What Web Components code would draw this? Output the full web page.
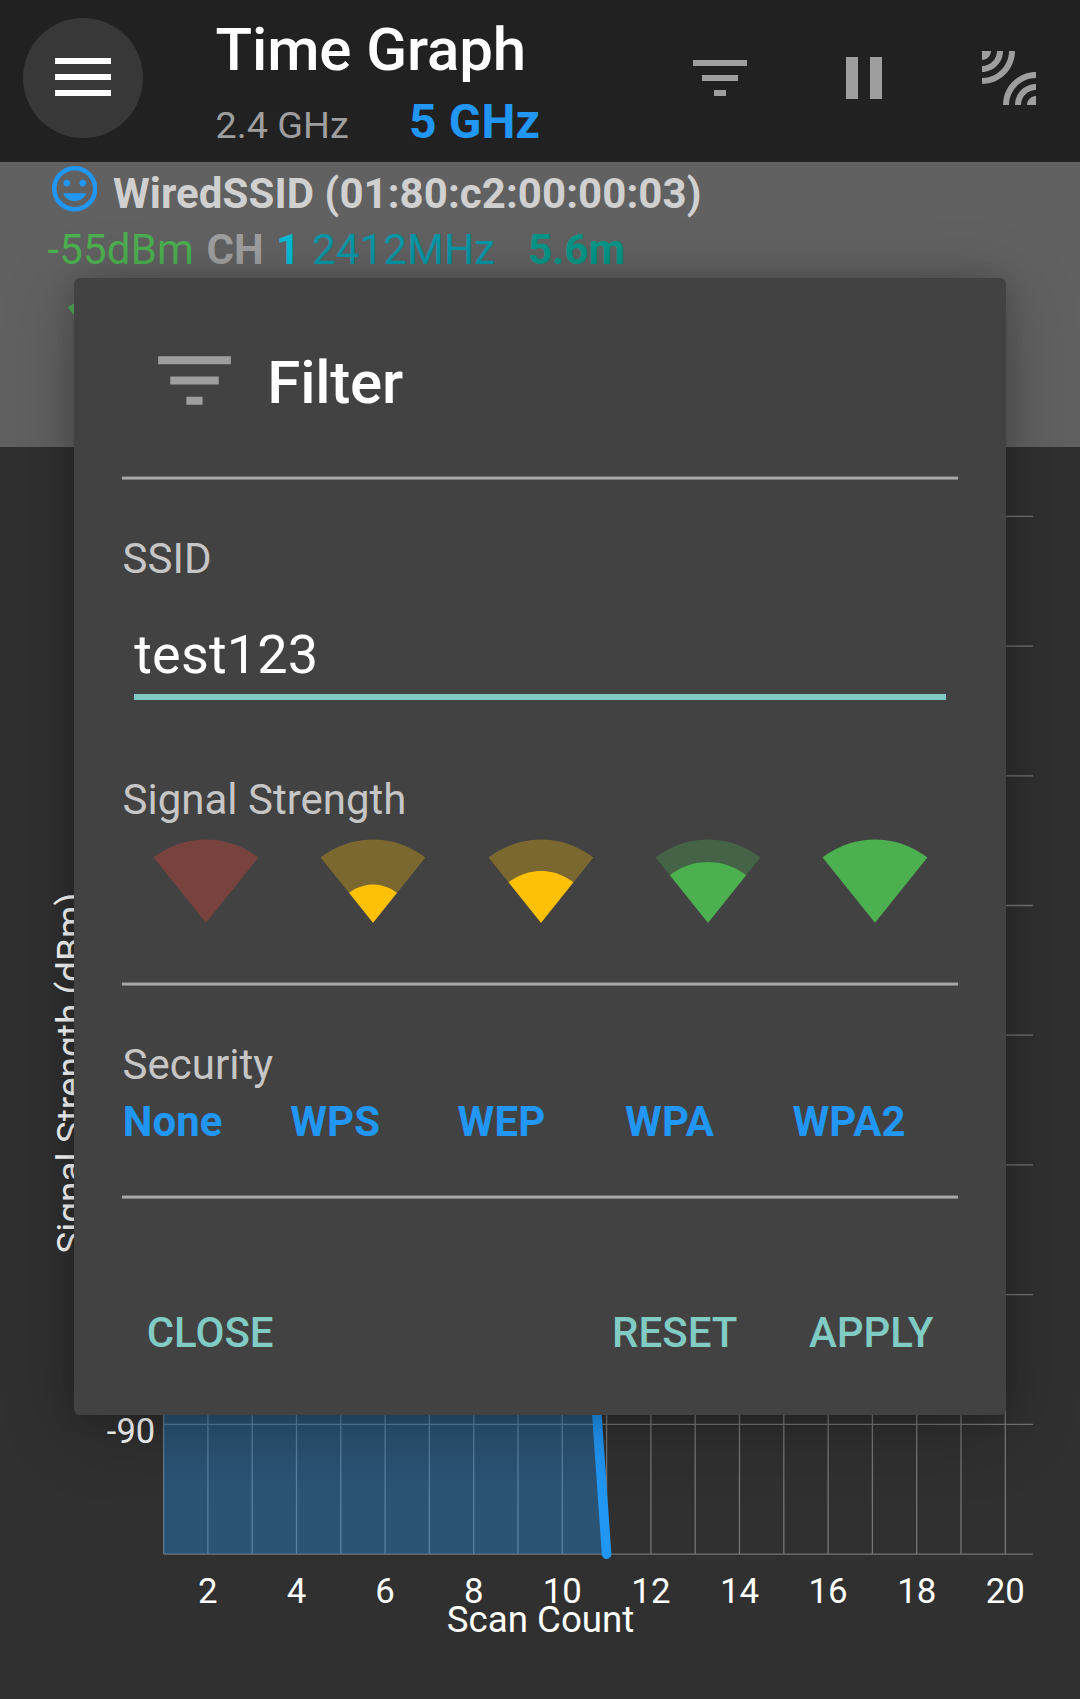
<!DOCTYPE html>
<html lang="en">
<head>
<meta charset="utf-8">
<title>Time Graph</title>
<style>
html, body { margin: 0; padding: 0; background: #303030; }
body { font-family: Roboto, "Liberation Sans", sans-serif; width: 1080px; height: 1699px; overflow: hidden; }
</style>
</head>
<body>
<wifi-app></wifi-app>
<script>
const define = (name, html, init) => {
  const template = document.createElement('template');
  template.innerHTML = html;
  customElements.define(name, class extends HTMLElement {
    connectedCallback() {
      if (this.shadowRoot) return;
      this.attachShadow({ mode: 'open' }).append(template.content.cloneNode(true));
      if (init) init(this, this.shadowRoot);
    }
  });
};

const ICONS = {
  filter: '<path d="M10 18h4v-2h-4v2zM3 6v2h18V6H3zm3 7h12v-2H6v2z"/>',
  pause: '<path d="M6 19h4V5H6v14zm8-14v14h4V5h-4z"/>',
  leak: '<path d="M6 3H3v3c1.66 0 3-1.34 3-3zm8 0h-2c0 4.97-4.03 9-9 9v2c6.08 0 11-4.93 11-11zm-4 0H8c0 2.76-2.24 5-5 5v2c3.87 0 7-3.13 7-7zm0 18h2c0-4.97 4.03-9 9-9v-2c-6.07 0-11 4.93-11 11zm8 0h3v-3c-1.66 0-3 1.34-3 3zm-4 0h2c0-2.76 2.24-5 5-5v-2c-3.87 0-7 3.13-7 7z"/>',
  smile: '<path d="M11.99 2C6.47 2 2 6.48 2 12s4.47 10 9.99 10C17.52 22 22 17.52 22 12S17.52 2 11.99 2zM12 20c-4.42 0-8-3.58-8-8s3.58-8 8-8 8 3.58 8 8-3.58 8-8 8zm3.5-9c.83 0 1.5-.67 1.5-1.5S16.33 8 15.5 8 14 8.67 14 9.5s.67 1.5 1.5 1.5zm-7 0c.83 0 1.5-.67 1.5-1.5S9.33 8 8.5 8 7 8.67 7 9.5 7.67 11 8.5 11zm3.5 6.5c2.33 0 4.31-1.46 5.11-3.5H6.89c.8 2.04 2.78 3.5 5.11 3.5z"/>'
};
const WEDGE = 'M12.01 21.49L23.64 7c-.45-.34-4.93-4-11.64-4C5.28 3 .81 6.66.36 7l11.63 14.49.01.01.01-.01z';
const LEVELS = [
  '',
  'M6.67 14.86L12 21.49v.01l.01-.01 5.33-6.63C17.06 14.65 15.03 13 12 13s-5.06 1.65-5.33 1.86z',
  'M4.79 12.52l7.2 8.98H12l.01-.01 7.2-8.98C18.85 12.24 16.1 10 12 10s-6.79 2.24-7.21 2.52z',
  'M3.53 10.95l8.46 10.54.01.01.01-.01 8.46-10.54C20.04 10.62 16.81 8 12 8c-4.81 0-8.04 2.62-8.47 2.95z',
  WEDGE
];

define('md-icon', `<style>
:host { display: block; flex: none; width: 72px; height: 72px; color: #9e9e9e; }
svg { display: block; width: 100%; height: 100%; fill: currentColor; }
</style><svg viewBox="0 0 24 24"></svg>`, (el, root) => {
  const svg = root.querySelector('svg');
  if (el.hasAttribute('box')) svg.setAttribute('viewBox', el.getAttribute('box'));
  svg.innerHTML = ICONS[el.getAttribute('name')];
});

define('signal-icon', `<style>
:host { display: block; flex: none; width: 108px; height: 108px; }
svg { display: block; width: 100%; height: 100%; fill: currentColor; }
</style><svg viewBox="0 0 24 24"></svg>`, (el, root) => {
  const level = +el.getAttribute('level');
  root.querySelector('svg').innerHTML =
    (level < 4 ? `<path fill-opacity=".3" d="${WEDGE}"/>` : '') +
    (level ? `<path d="${LEVELS[level]}"/>` : '');
});

define('app-header', `<style>
:host { display: flex; height: 162px; background: #212121; box-sizing: border-box; }
.menu { width: 120px; height: 120px; margin: 18px 0 0 23px; border-radius: 50%; background: #383838; box-sizing: border-box;
  display: flex; flex-direction: column; align-items: flex-start; gap: 10px; padding: 40px 0 0 32px; }
.menu i { display: block; width: 56px; height: 6px; background: #fff; }
.titles { margin-left: 72.5px; padding-top: 14px; width: 468.5px; white-space: nowrap; }
.title { font-size: 60px; font-weight: 500; line-height: 71px; color: #fff; letter-spacing: -.1px; }
.bands { display: flex; align-items: baseline; margin-top: 8px; line-height: 57px; height: 57px; }
.b24 { width: 193.5px; font-size: 37.8px; color: #9e9e9e; }
.b5 { font-size: 48px; font-weight: 700; color: #2196f3; letter-spacing: .1px; }
.actions { display: flex; gap: 72px; padding-top: 42px; }
.actions md-icon:last-child { margin-left: 1px; }
</style>
<div class="menu"><i></i><i></i><i></i></div>
<div class="titles"><div class="title">Time Graph</div>
<div class="bands"><span class="b24">2.4 GHz</span><span class="b5">5 GHz</span></div></div>
<div class="actions"><md-icon name="filter"></md-icon><md-icon name="pause"></md-icon><md-icon name="leak"></md-icon></div>`);

define('access-point', `<style>
:host { display: block; height: 285px; box-sizing: border-box; padding-top: 4px; background: #616161; white-space: nowrap;
  font-size: 42px; line-height: 49px; }
.name { display: flex; gap: 16px; padding-left: 51.5px; height: 59px; font-weight: 700; color: #d0d0d0; letter-spacing: .07px; }
.name span { padding-top: 3px; }
md-icon { width: 45.5px; height: 45.5px; color: #2196f3; }
.facts { display: grid; grid-template-columns: 159px 69.5px 36px 216px auto; padding-left: 47.5px; height: 65px; letter-spacing: .16px; }
b { font-weight: 700; letter-spacing: 0; }
signal-icon { width: 60px; height: 60px; margin-left: 67px; color: #4caf50; }
</style>
<div class="name"><md-icon name="smile" box="2 2 20 20"></md-icon><span>WiredSSID (01:80:c2:00:00:03)</span></div>
<div class="facts"><span style="color:#4caf50">-55dBm</span><b style="color:#9e9e9e">CH</b><b style="color:#00bcd4">1</b><span style="color:#0097a7">2412MHz</span><b style="color:#009688">5.6m</b></div>
<signal-icon level="4"></signal-icon>`);

define('time-chart', `<style>
:host { display: block; height: 1252px; }
svg { display: block; }
text { fill: #fff; font-size: 34.8px; }
.axis { font-size: 36.7px; }
</style><svg width="1080" height="1252" viewBox="0 447 1080 1252"></svg>`, (el, root) => {
  const left = 163.6, step = 44.3, bottom = 1554.1;
  let s = '<g stroke="#757575" stroke-width="1.3">';
  for (let i = 0; i < 9; i++) s += `<path d="M${left} ${bottom - i * 129.72}H1033"/>`;
  for (let i = 0; i < 20; i++) s += `<path d="M${left + i * step} 516V${bottom}"/>`;
  s += '</g>';
  s += `<path d="M${left} 919H562.3L606.6 ${bottom}H${left}z" fill="#2196f3" fill-opacity=".35"/>`;
  s += `<path d="M${left} 919H562.3L606.6 ${bottom}" fill="none" stroke="#2196f3" stroke-width="9.6" stroke-linecap="round"/>`;
  for (let n = 2; n <= 20; n += 2)
    s += `<text x="${left + (n - 1) * step}" y="1603" text-anchor="middle">${n}</text>`;
  s += '<text x="155.2" y="1442.6" text-anchor="end" style="font-size:34.500px">-90</text>';
  s += '<text class="axis" x="540.5" y="1631.5" text-anchor="middle">Scan Count</text>';
  s += '<text class="axis" style="font-size:37px" transform="translate(82.5 1073.2) rotate(-90)" text-anchor="middle">Signal Strength (dBm)</text>';
  root.querySelector('svg').innerHTML = s;
});

define('line-divider', `<style>
:host { display: block; height: 4px; background: linear-gradient(#6f6f6f 0 1px, #a9a9a9 1px 3px, #7c7c7c 3px 4px); }
</style>`);

define('filter-dialog', `<style>
:host { display: flex; flex-direction: column; box-sizing: border-box; position: absolute; left: 74.3px; top: 278px;
  width: 931.7px; height: 1137px; padding: 54px 48px 0; border-radius: 6px; background: #424242;
  box-shadow: 0 14px 70px rgba(0,0,0,.25), 0 0 24px rgba(0,0,0,.14); font-size: 42px; line-height: 49px; white-space: nowrap; }
header { display: flex; align-items: center; gap: 24px; height: 96px; padding-left: 24px; margin-bottom: 48px; }
header md-icon { width: 97px; height: 97px; }
h1 { margin: 5px 0 0; font-size: 60px; line-height: 71px; font-weight: 500; color: #fff; letter-spacing: -.2px; }
.label { color: #c6c6c6; margin-top: 54px; padding-left: .3px; }
.field { margin: 40px 12px 0; height: 71px; border-bottom: 6px solid #80cbc4; font-size: 54px; line-height: 63px; color: #fff; letter-spacing: .15px; }
.strength { margin-top: 75px; }
.row { display: grid; grid-template-columns: repeat(5, 1fr); }
.signals { margin: 2px -1px 48px 0; justify-items: center; }
.security { margin: 8px -2px 49px 0; padding-left: .4px; font-weight: 700; color: #2196f3; letter-spacing: .1px; }
footer { display: flex; margin-top: 109px; padding: 0 24.5px 0 24.4px; font-weight: 500; color: #80cbc4; }
footer span:first-child { flex: 1; }
footer span:last-child { margin-left: 71.5px; }
</style>
<header><md-icon name="filter"></md-icon><h1>Filter</h1></header>
<line-divider></line-divider>
<div class="label">SSID</div>
<div class="field">test123</div>
<div class="label strength">Signal Strength</div>
<div class="row signals">
<signal-icon level="0" style="color:#f44336"></signal-icon>
<signal-icon level="1" style="color:#ffc107"></signal-icon>
<signal-icon level="2" style="color:#ffc107"></signal-icon>
<signal-icon level="3" style="color:#4caf50"></signal-icon>
<signal-icon level="4" style="color:#4caf50"></signal-icon>
</div>
<line-divider></line-divider>
<div class="label">Security</div>
<div class="row security"><span>None</span><span>WPS</span><span>WEP</span><span>WPA</span><span>WPA2</span></div>
<line-divider></line-divider>
<footer><span>CLOSE</span><span>RESET</span><span>APPLY</span></footer>`);

define('wifi-app', `<style>
:host { display: block; position: relative; width: 1080px; height: 1699px; overflow: hidden; background: #303030; }
</style>
<app-header></app-header>
<access-point></access-point>
<time-chart></time-chart>
<filter-dialog></filter-dialog>`);
</script>
</body>
</html>
